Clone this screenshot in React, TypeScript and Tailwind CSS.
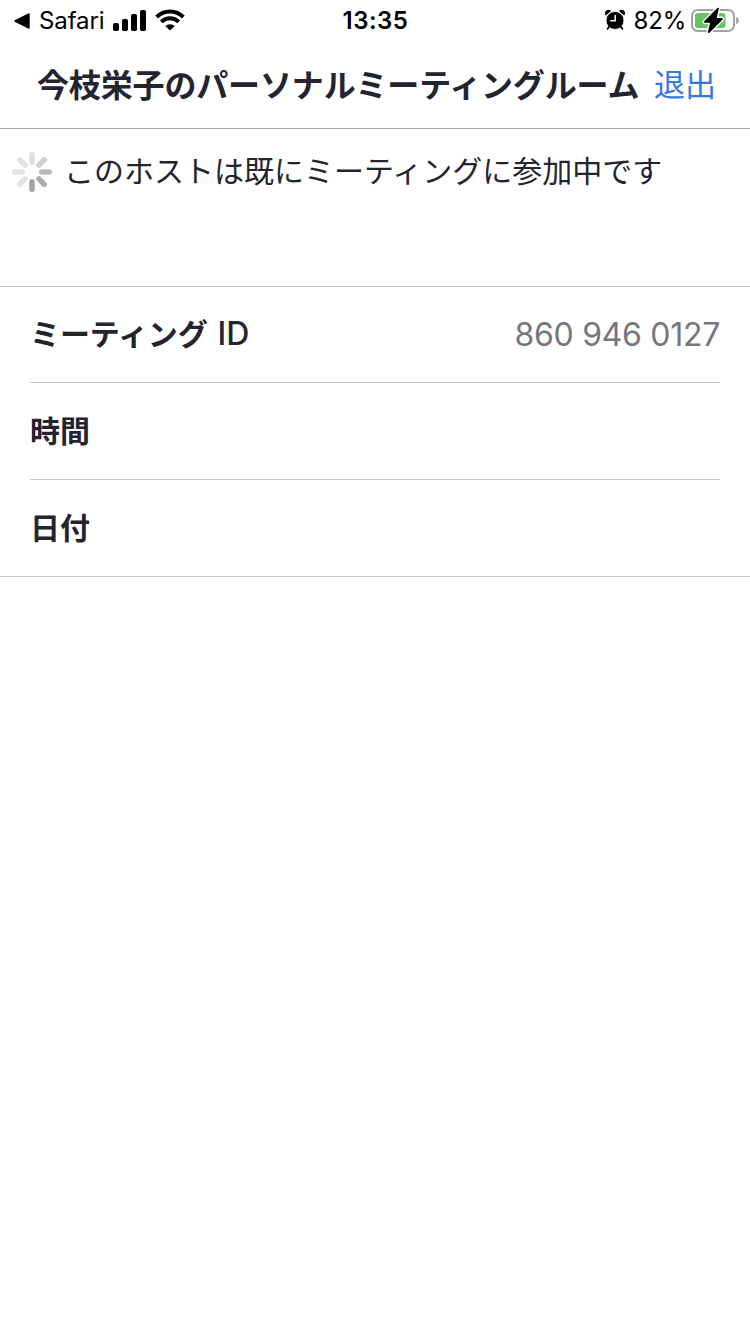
const STATUS_FONT = "font-['Inter','Noto_Sans_CJK_JP',sans-serif]";
const JP_FONT = "font-['Noto_Sans_CJK_JP',sans-serif]";

const spokes = [
  { angle: 0, color: "#dfdfdf" },
  { angle: 45, color: "#d0d0d0" },
  { angle: 90, color: "#bababa" },
  { angle: 135, color: "#acacac" },
  { angle: 180, color: "#a3a3a3" },
  { angle: 225, color: "#e3e3e3" },
  { angle: 270, color: "#e3e3e3" },
  { angle: 315, color: "#e1e1e1" },
];

const Spinner = () => (
  <svg className="w-10 h-10 shrink-0" viewBox="-20 -20 40 40">
    {spokes.map(({ angle, color }) => (
      <rect key={angle} x="-2.75" y="-20" width="5.5" height="13" rx="2.75" fill={color} transform={`rotate(${angle})`} />
    ))}
  </svg>
);

const SignalIcon = () => (
  <svg className="w-[33px] h-[21px]" viewBox="0 0 33 21">
    <rect x="0" y="13" width="6" height="8" rx="1.8" />
    <rect x="9" y="9" width="6" height="12" rx="1.8" />
    <rect x="18" y="4" width="6" height="17" rx="1.8" />
    <rect x="27" y="0" width="6" height="21" rx="1.8" />
  </svg>
);

const WifiIcon = () => (
  <svg className="w-[30px] h-[22px]" viewBox="0 0 30 22">
    <path d="M1.7 8 A18.8 18.8 0 0 1 28.3 8" fill="none" stroke="#000" strokeWidth="4" />
    <path d="M6.3 12.9 A12.2 12.2 0 0 1 23.7 12.9" fill="none" stroke="#000" strokeWidth="3.9" />
    <path d="M10.3 17 A7.2 7.2 0 0 1 19.7 17 L15 21.6 Z" />
  </svg>
);

const AlarmIcon = () => (
  <svg className="w-5 h-5" viewBox="0 0 20 20">
    <path d="M1 5.6 A3.2 3.2 0 0 1 6 0.9 Z M19 5.6 A3.2 3.2 0 0 0 14 0.9 Z" />
    <circle cx="10" cy="10.4" r="9" stroke="#fff" strokeWidth="0.8" />
    <path d="M4.2 16.6 L2.6 18.8 M15.8 16.6 L17.4 18.8" stroke="#000" strokeWidth="1.8" strokeLinecap="round" />
    <path d="M10.2 5.4 V10.8 H5.8" fill="none" stroke="#fff" strokeWidth="1.5" strokeLinecap="round" />
  </svg>
);

const BatteryIcon = () => (
  <svg className="w-[48px] h-[26px]" viewBox="0 0 48 26">
    <rect x="1" y="3" width="42" height="21" rx="5.8" fill="#fff" stroke="#a2a2a2" strokeWidth="2" />
    <path d="M45.2 9.8 Q48 11 48 13.5 Q48 16 45.2 17.2 Z" fill="#a2a2a2" />
    <rect x="4" y="6" width="30.5" height="15" rx="3" fill="#65c466" />
    <path d="M27 1.6 L13.8 14.9 H20.2 L17.8 25 L31 11.8 H24.6 Z" fill="#fff" stroke="#fff" strokeWidth="4.6" strokeLinejoin="round" />
    <path d="M27 1.6 L13.8 14.9 H20.2 L17.8 25 L31 11.8 H24.6 Z" stroke="#000" strokeWidth="1.8" strokeLinejoin="round" />
  </svg>
);

const StatusBar = () => (
  <div className={`grid grid-cols-3 items-center h-10 text-2xl text-black ${STATUS_FONT}`}>
    <div className="flex items-center pl-[14px]">
      <svg className="w-4 h-4 mt-px" viewBox="0 0 16 16">
        <path d="M1 8 L15 1 V15 Z" stroke="#000" strokeWidth="1.4" strokeLinejoin="round" />
      </svg>
      <span className="ml-[9px] mt-px w-[65px] tracking-[-0.1px]">Safari</span>
      <span className="ml-[9px]"><SignalIcon /></span>
      <span className="ml-[9px]"><WifiIcon /></span>
    </div>
    <div className="pl-px text-center font-semibold mt-px tracking-[0.5px]">13:35</div>
    <div className="flex items-center justify-end pr-[11px]">
      <AlarmIcon />
      <span className="ml-[9px] mr-[5px] mt-px tracking-[-0.2px]">82%</span>
      <BatteryIcon />
    </div>
  </div>
);

const rows = [
  { label: "ミーティング", suffix: "ID", value: "860 946 0127" },
  { label: "時間", suffix: "", value: "" },
  { label: "日付", suffix: "", value: "" },
];

export default function App() {
  return (
    <div className={`w-full h-[1334px] bg-white text-[#242330] overflow-hidden ${JP_FONT}`}>
      <StatusBar />
      <header className="flex items-center h-[89px] pl-[37px] pr-[34px] pb-[3px] border-b border-[#a9a9ab]">
        <h1 className="text-[32px] leading-[48px] font-bold tracking-[-0.15px] whitespace-nowrap">
          今枝栄子のパーソナルミーティングルーム
        </h1>
        <button className="ml-auto text-[31px] leading-[48px] text-[#3478dc] whitespace-nowrap">退出</button>
      </header>
      <div className="flex items-start h-[157px] pl-3 pt-[23px]">
        <Spinner />
        <p className="-mt-[3px] ml-3 text-[30px] leading-10 whitespace-nowrap">このホストは既にミーティングに参加中です</p>
      </div>
      <div className="border-y border-[#c7c7c9] px-[30px]">
        {rows.map((row) => (
          <div key={row.label} className="flex items-center justify-between h-[97px] border-b border-[#c7c7c9] first:h-24 last:h-24 last:border-b-0">
            <span className="pb-[4px] text-[30px] leading-[44px] font-bold tracking-[-0.1px] whitespace-nowrap">
              {row.label}
              {row.suffix && <span className="ml-[10px] text-[32px] font-medium font-['Inter',sans-serif]">{row.suffix}</span>}
            </span>
            <span className="text-[32px] tracking-[-0.3px] text-[#77767d] font-['Inter',sans-serif]">{row.value}</span>
          </div>
        ))}
      </div>
    </div>
  );
}
